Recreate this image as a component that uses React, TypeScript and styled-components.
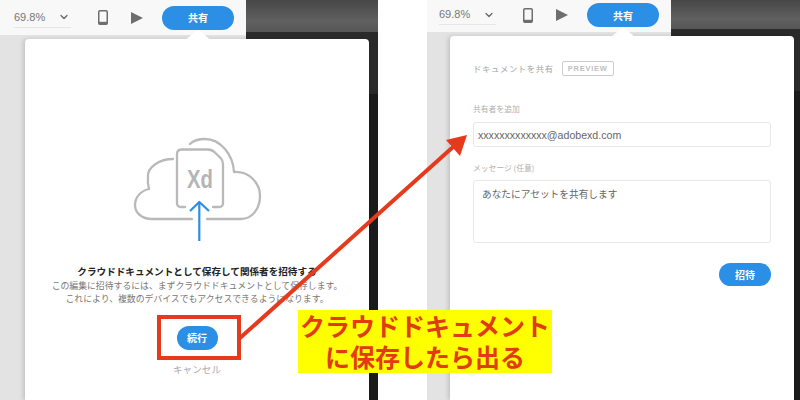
import React from 'react';
import styled, { createGlobalStyle } from 'styled-components';
import { ChevronDown } from 'lucide-react';

const GlobalStyle = createGlobalStyle`
  html, body {
    margin: 0;
    padding: 0;
    background: #fff;
  }
  * {
    box-sizing: border-box;
  }
`;

const fontStack = '"Noto Sans CJK JP", "Noto Sans", sans-serif';

const Page = styled.div`
  position: relative;
  display: flex;
  width: 800px;
  height: 400px;
  overflow: hidden;
  background: #fff;
  font-family: ${fontStack};
`;

const Screen = styled.section<{ $width: number; $gutter: number }>`
  display: flex;
  flex-direction: column;
  width: ${props => props.$width}px;
  margin-left: ${props => props.$gutter}px;
  height: 100%;
`;

const TopRow = styled.div<{ $height: number }>`
  display: flex;
  flex: none;
  height: ${props => props.$height}px;
  background: linear-gradient(#474747, #606060 60%, #565656 ${props => props.$height - 3}px, #2a2a2a ${props => props.$height - 3}px);
`;

const Toolbar = styled.div<{ $width: number; $inset: number; $lift: number }>`
  display: flex;
  align-items: center;
  width: ${props => props.$width}px;
  padding-left: ${props => props.$inset}px;
  padding-bottom: ${props => props.$lift}px;
  background: #f8f8f8;
`;

const Zoom = styled.div`
  display: flex;
  align-items: center;
  justify-content: space-between;
  width: 57px;
  height: 20px;
  border-bottom: 1px solid #e6e6e6;
  color: #777;
  font-family: "Liberation Sans", Arial, sans-serif;
  font-size: 11px;
  line-height: 1;
`;

const Caret = styled(ChevronDown)`
  width: 12px;
  height: 12px;
  margin-right: 1px;
  color: #666;
`;

const ToolIcon = styled.svg`
  display: block;
  flex: none;
`;

const PhoneIcon = styled(ToolIcon)`
  margin-left: 27px;
`;

const PlayIcon = styled(ToolIcon)`
  margin-left: 23px;
`;

const ShareWrap = styled.div`
  position: relative;
  margin-left: 19px;
`;

const Pill = styled.button<{ $width: number; $height: number }>`
  display: flex;
  flex: none;
  align-items: center;
  justify-content: center;
  width: ${props => props.$width}px;
  height: ${props => props.$height}px;
  padding: 0;
  border: 0;
  border-radius: 13px;
  background: #2b8fe6;
  color: #fff;
  font-family: ${fontStack};
  font-size: 10px;
  font-weight: 700;
`;

const Pointer = styled.span`
  position: absolute;
  left: 24px;
  top: 100%;
  z-index: 2;
  width: 24px;
  height: 10px;
  background: #fff;
  clip-path: polygon(50% 0, 100% 100%, 0 100%);
`;

const Workspace = styled.div<{ $toolbar: number; $band: number }>`
  display: flex;
  flex: 1;
  min-height: 0;
  background:
    linear-gradient(to right, #e3e3e3 ${props => props.$toolbar}px, transparent ${props => props.$toolbar}px),
    linear-gradient(#2a2a2a ${props => props.$band}px, #1b1b1b ${props => props.$band}px);
`;

const Card = styled.div<{ $left: number; $top: number }>`
  display: flex;
  flex-direction: column;
  width: 344px;
  margin: ${props => props.$top}px 0 0 ${props => props.$left}px;
  border-radius: 4px 4px 0 0;
  background: #fff;
  box-shadow: -2px 0 4px rgba(0, 0, 0, 0.14);
`;

const IntroCard = styled(Card)`
  align-items: center;
  padding-top: 80px;
`;

const CloudArt = styled.svg`
  display: block;
  flex: none;
`;

const IntroTitle = styled.h2`
  margin: 22px 0 0;
  color: #222;
  font-size: 9.6px;
  font-weight: 700;
  line-height: 14px;
  white-space: nowrap;
`;

const IntroText = styled.p`
  margin: 1px 0 0;
  color: #777;
  font-size: 8.85px;
  line-height: 13px;
  text-align: center;
  white-space: nowrap;
`;

const ContinueBox = styled.div`
  display: flex;
  align-items: center;
  justify-content: center;
  width: 84px;
  height: 45px;
  margin: 10px 0 0 3px;
  padding-right: 3px;
  border: 4px solid #e63a1c;
`;

const CancelLink = styled.span`
  margin-top: 2px;
  color: #aaa;
  font-size: 9.6px;
  line-height: 14px;
`;

const ShareCard = styled(Card)`
  padding: 24px 23px 0;
`;

const Heading = styled.div`
  display: flex;
  align-items: center;
  gap: 8px;
  height: 16px;
`;

const HeadingText = styled.span`
  color: #a6a6a6;
  font-size: 8.4px;
  letter-spacing: 0.6px;
`;

const PreviewTag = styled.span`
  padding: 0 5px;
  border: 1px solid #ccc;
  border-radius: 2px;
  color: #c0c0c0;
  font-family: "Liberation Sans", sans-serif;
  font-size: 7.5px;
  font-weight: 700;
  letter-spacing: 0.75px;
  line-height: 13px;
`;

const FieldLabel = styled.label<{ $top: number }>`
  display: block;
  margin-top: ${props => props.$top}px;
  color: #b0b0b0;
  font-size: 7.8px;
  line-height: 12px;
`;

const Field = styled.div<{ $height: number; $top: number }>`
  height: ${props => props.$height}px;
  margin-top: ${props => props.$top}px;
  border: 1px solid #e8e8e8;
  border-radius: 3px;
  color: #666;
`;

const EmailField = styled(Field)`
  display: flex;
  align-items: center;
  padding: 0 4px;
  font-family: "Liberation Sans", Arial, sans-serif;
  font-size: 10.6px;
`;

const MessageField = styled(Field)`
  padding: 6px 8px;
  font-size: 9.7px;
  line-height: 14px;
`;

const FormFooter = styled.div`
  display: flex;
  justify-content: flex-end;
  margin-top: 20px;
`;

const ArrowLayer = styled.svg`
  position: absolute;
  top: 0;
  left: 0;
  pointer-events: none;
`;

const Callout = styled.div`
  position: absolute;
  left: 298px;
  top: 310px;
  width: 254px;
  height: 63px;
  background: #ffff00;
  color: #e23b12;
  font-size: 25px;
  font-weight: 700;
  line-height: 31px;
  text-align: center;
  white-space: nowrap;
`;

const ToolbarContent = ({ inset, width, lift }: { inset: number; width: number; lift: number }) => (
  <Toolbar $width={width} $inset={inset} $lift={lift}>
    <Zoom>
      69.8%
      <Caret strokeWidth={2.5} />
    </Zoom>
    <PhoneIcon width="10" height="15" viewBox="0 0 10 15">
      <rect x="0.75" y="0.75" width="8.5" height="13.5" rx="1.2" fill="none" stroke="#6e6e6e" strokeWidth="1.5" />
      <rect x="0.75" y="11.8" width="8.5" height="2.5" fill="#6e6e6e" />
    </PhoneIcon>
    <PlayIcon width="12" height="12" viewBox="0 0 12 12">
      <path d="M0 0 L12 6 L0 12 Z" fill="#6e6e6e" />
    </PlayIcon>
    <ShareWrap>
      <Pill $width={72} $height={24}>共有</Pill>
      <Pointer />
    </ShareWrap>
  </Toolbar>
);

export default function App() {
  return (
    <Page>
      <GlobalStyle />

      <Screen $width={378} $gutter={0}>
        <TopRow $height={35}>
          <ToolbarContent inset={14} width={246} lift={0} />
        </TopRow>
        <Workspace $toolbar={246} $band={59}>
          <IntroCard $left={25} $top={4}>
            <CloudArt width="130" height="123" viewBox="0 0 130 123">
              <g fill="none" stroke="#b9b9b9" strokeWidth="2.3" strokeLinecap="round" strokeLinejoin="round">
                <path d="M41 40 C28 40 15 48 16 58 C15.500 62 16 66 17 70 C8 72 3 79 3 86 C3 94 10 100 20 100 L60 100" />
                <path d="M75 100 L109 100 C120 100 128 90 128 77 C128 64 117 52 102 53 C101 35 88 20 73 20 C66 20 61 22 58 25" />
                <path d="M53 88 L49 88 C46 88 45 86 45 84 L45 35 C45 32 47 30.500 50 30.500 L76 30.500 C79 30.500 81 31.500 83 33.500 L89 39.500 C90.500 41 91 43 91 45 L91 84 C91 86 90 88 87 88 L81 88" />
              </g>
              <text x="55" y="69" fill="#b5b5b5" fontFamily="Liberation Sans, sans-serif" fontSize="26" fontWeight="700" textLength="26" lengthAdjust="spacingAndGlyphs">Xd</text>
              <g fill="none" stroke="#2b8fe6" strokeWidth="2.2" strokeLinejoin="round">
                <path d="M67.300 122 L67.300 83" />
                <path d="M58 92 L67.300 83 L77 92" />
              </g>
            </CloudArt>
            <IntroTitle>クラウドドキュメントとして保存して関係者を招待する</IntroTitle>
            <IntroText>
              この編集に招待するには、まずクラウドドキュメントとして保存します。
              <br />
              これにより、複数のデバイスでもアクセスできるようになります。
            </IntroText>
            <ContinueBox>
              <Pill $width={41} $height={24}>続行</Pill>
            </ContinueBox>
            <CancelLink>キャンセル</CancelLink>
          </IntroCard>
        </Workspace>
      </Screen>

      <Screen $width={373} $gutter={49}>
        <TopRow $height={32}>
          <ToolbarContent inset={12} width={244} lift={2} />
        </TopRow>
        <Workspace $toolbar={244} $band={59}>
          <ShareCard $left={23} $top={4}>
            <Heading>
              <HeadingText>ドキュメントを共有</HeadingText>
              <PreviewTag>PREVIEW</PreviewTag>
            </Heading>
            <FieldLabel $top={27}>共有者を追加</FieldLabel>
            <EmailField $height={25} $top={7}>xxxxxxxxxxxxx@adobexd.com</EmailField>
            <FieldLabel $top={15}>メッセージ (任意)</FieldLabel>
            <MessageField $height={63} $top={6}>あなたにアセットを共有します</MessageField>
            <FormFooter>
              <Pill $width={52} $height={23}>招待</Pill>
            </FormFooter>
          </ShareCard>
        </Workspace>
      </Screen>

      <ArrowLayer width="800" height="400" viewBox="0 0 800 400">
        <path d="M240 338 L453 147" stroke="#e63a1c" strokeWidth="4" fill="none" />
        <path d="M467 135 L446 140 L460 156 Z" fill="#e63a1c" />
      </ArrowLayer>

      <Callout>
        クラウドドキュメント
        <br />
        に保存したら出る
      </Callout>
    </Page>
  );
}
